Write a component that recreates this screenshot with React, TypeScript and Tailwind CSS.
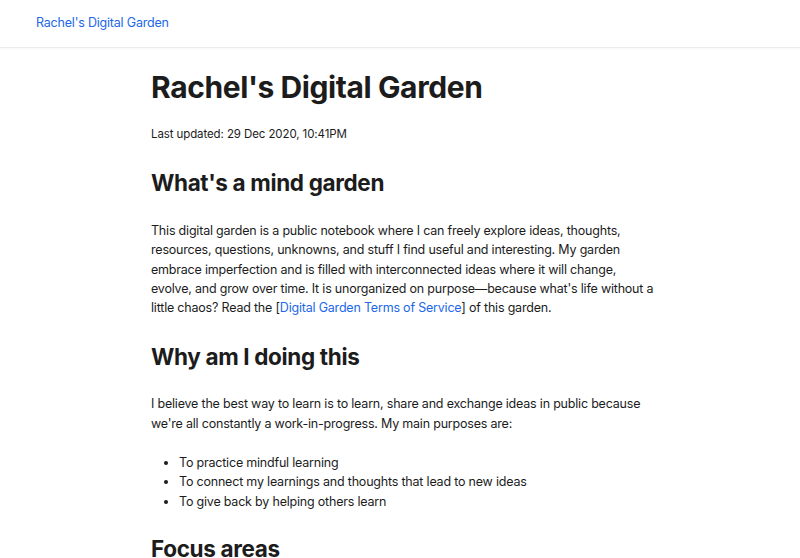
import React from 'react'

const Header = () => (
  <header className="h-12 flex items-center px-9 border-b border-[#ececec] shadow-[0_1px_2px_rgba(0,0,0,0.04)]">
    <a href="#" className="text-[12.5px] tracking-[-0.2px] text-[#2168e8]">Rachel's Digital Garden</a>
  </header>
)

const body = 'text-[12.5px] leading-[19.3px] tracking-[-0.2px]'
const h2 = 'text-[22.5px] font-bold leading-[32px] tracking-[-0.35px]'

const App = () => {
  return (
    <div className="min-h-screen bg-white text-[#1c1c1c] font-['Inter',sans-serif]">
      <Header />
      <main className="mx-auto w-[520px] pl-[11px] pt-[19px]">
        <h1 className="text-[30px] font-bold leading-[40px] tracking-[-0.4px]">Rachel's Digital Garden</h1>
        <p className="mt-[17px] text-[11.5px] leading-[20px] tracking-[-0.1px]">Last updated: 29 Dec 2020, 10:41PM</p>

        <h2 className={`mt-[23px] ${h2}`}>What's a mind garden</h2>
        <p className={`mt-[22px] ${body}`}>
          This digital garden is a public notebook where I can freely explore ideas, thoughts,
          resources, questions, unknowns, and stuff I find useful and interesting. My garden
          embrace imperfection and is filled with interconnected ideas where it will change,
          evolve, and grow over time. It is unorganized on purpose—because what's life without a
          little chaos? Read the [<a href="#" className="text-[#2168e8]">Digital Garden Terms of Service</a>] of this garden.
        </p>

        <h2 className={`mt-6 ${h2}`}>Why am I doing this</h2>
        <p className={`mt-[21px] ${body}`}>
          I believe the best way to learn is to learn, share and exchange ideas in public because
          we're all constantly a work-in-progress. My main purposes are:
        </p>
        <ul className={`mt-5 pl-7 list-disc ${body}`}>
          <li>To practice mindful learning</li>
          <li>To connect my learnings and thoughts that lead to new ideas</li>
          <li>To give back by helping others learn</li>
        </ul>

        <h2 className={`mt-[22px] ${h2}`}>Focus areas</h2>
      </main>
    </div>
  )
}

export default App
